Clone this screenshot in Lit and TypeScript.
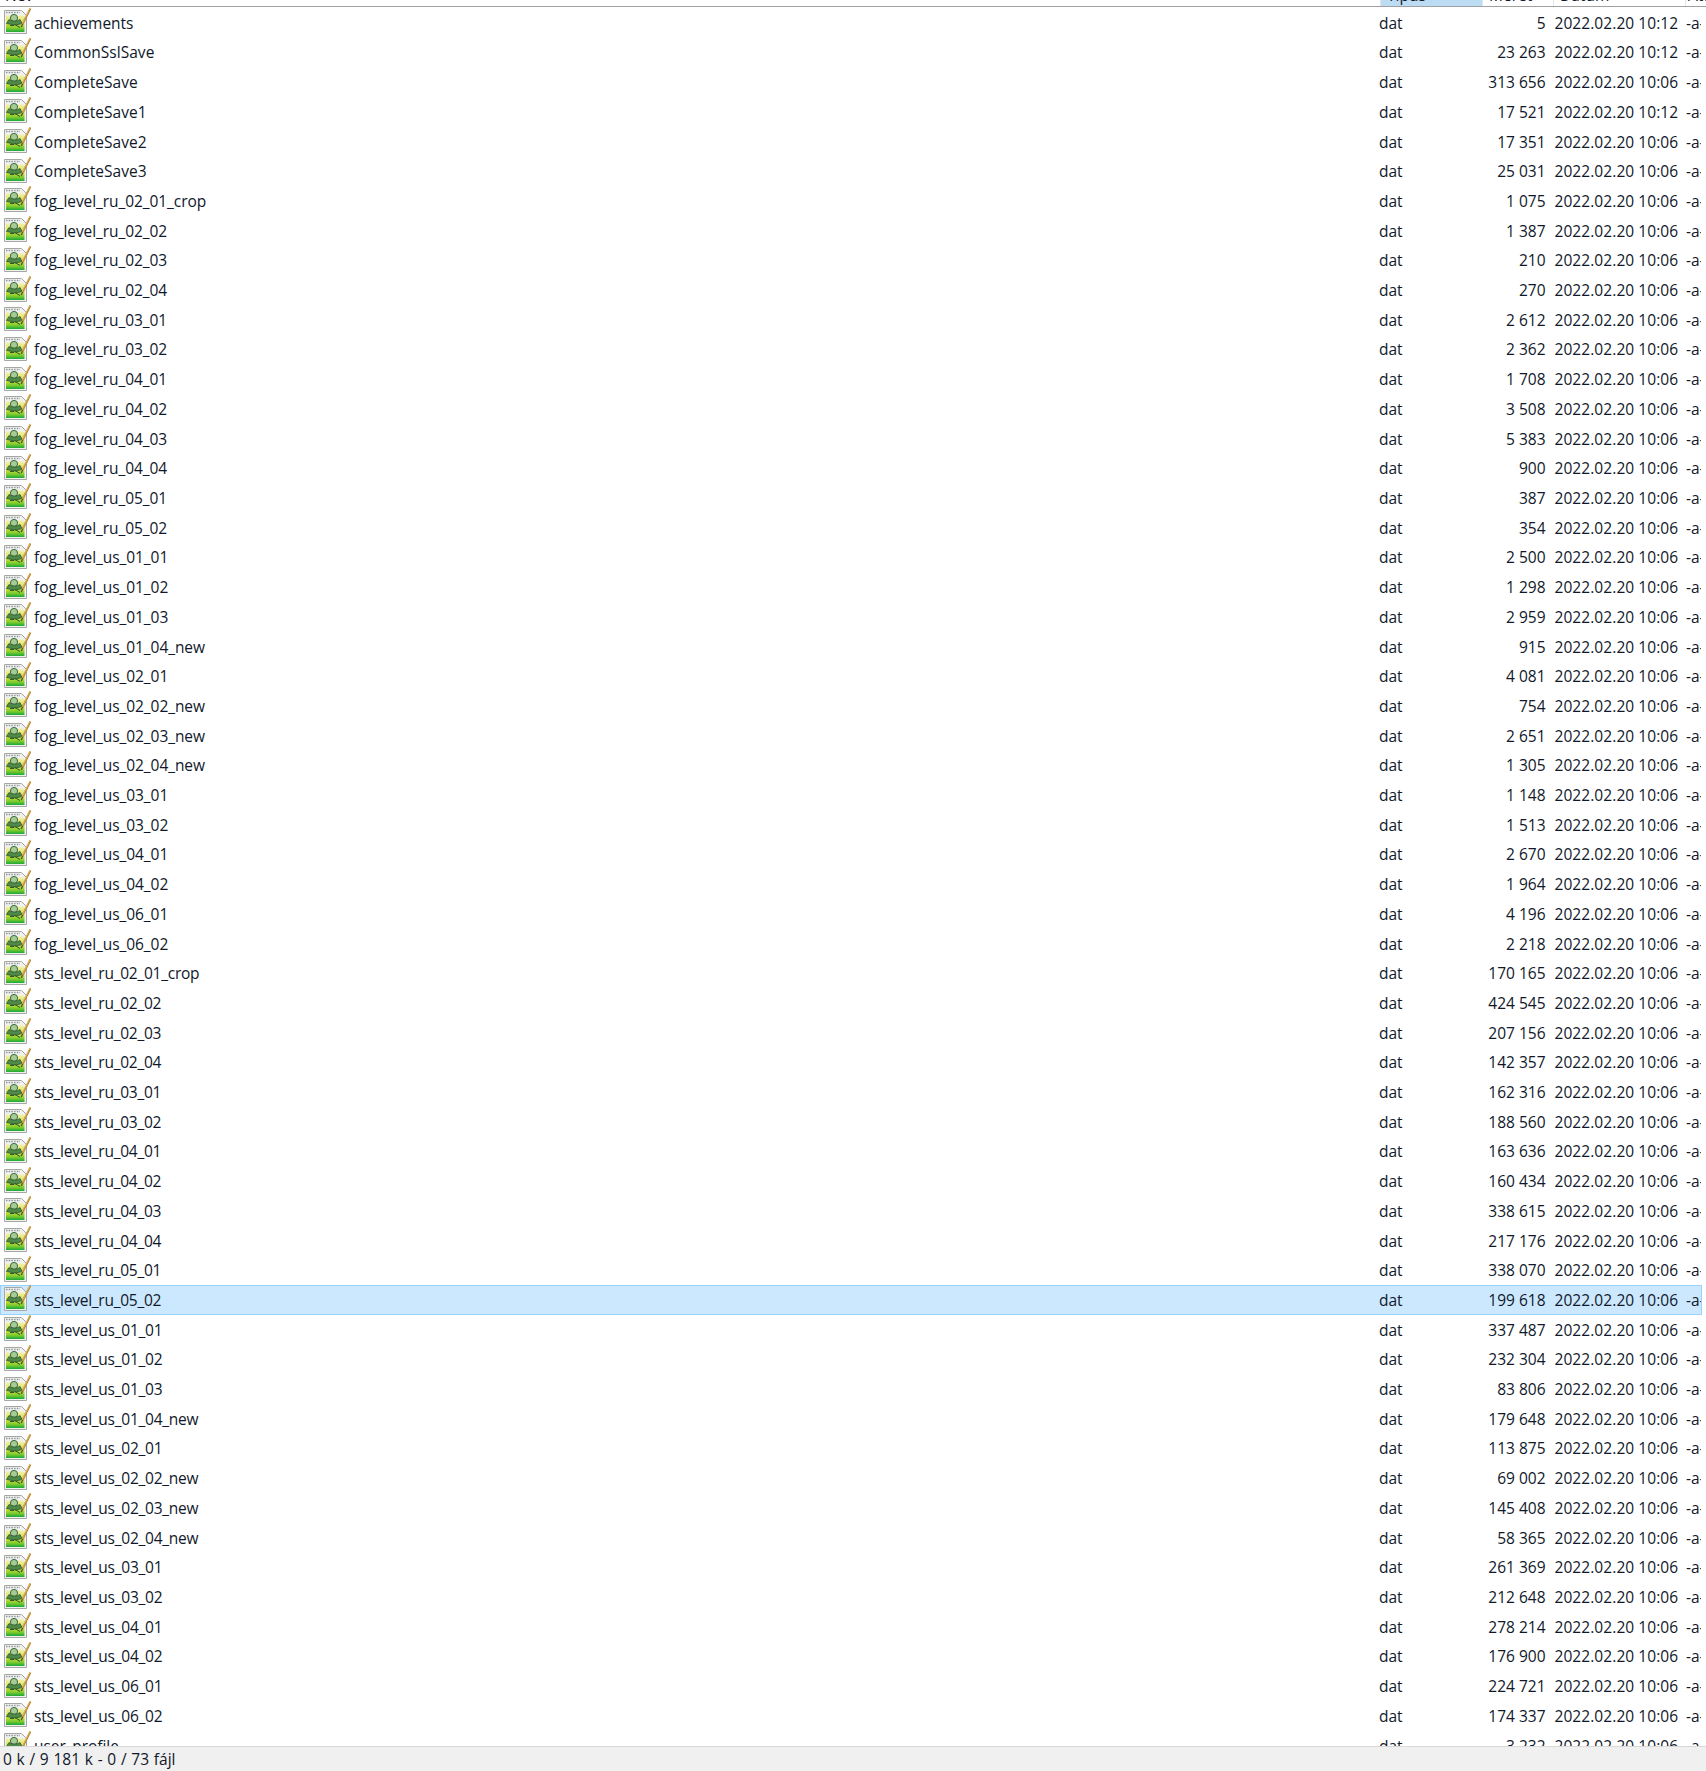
import { LitElement, html, css, svg } from "lit";
import { customElement } from "lit/decorators.js";

const data = `achievements|5|10:12
CommonSslSave|23 263|10:12
CompleteSave|313 656|10:06
CompleteSave1|17 521|10:12
CompleteSave2|17 351|10:06
CompleteSave3|25 031|10:06
fog_level_ru_02_01_crop|1 075|10:06
fog_level_ru_02_02|1 387|10:06
fog_level_ru_02_03|210|10:06
fog_level_ru_02_04|270|10:06
fog_level_ru_03_01|2 612|10:06
fog_level_ru_03_02|2 362|10:06
fog_level_ru_04_01|1 708|10:06
fog_level_ru_04_02|3 508|10:06
fog_level_ru_04_03|5 383|10:06
fog_level_ru_04_04|900|10:06
fog_level_ru_05_01|387|10:06
fog_level_ru_05_02|354|10:06
fog_level_us_01_01|2 500|10:06
fog_level_us_01_02|1 298|10:06
fog_level_us_01_03|2 959|10:06
fog_level_us_01_04_new|915|10:06
fog_level_us_02_01|4 081|10:06
fog_level_us_02_02_new|754|10:06
fog_level_us_02_03_new|2 651|10:06
fog_level_us_02_04_new|1 305|10:06
fog_level_us_03_01|1 148|10:06
fog_level_us_03_02|1 513|10:06
fog_level_us_04_01|2 670|10:06
fog_level_us_04_02|1 964|10:06
fog_level_us_06_01|4 196|10:06
fog_level_us_06_02|2 218|10:06
sts_level_ru_02_01_crop|170 165|10:06
sts_level_ru_02_02|424 545|10:06
sts_level_ru_02_03|207 156|10:06
sts_level_ru_02_04|142 357|10:06
sts_level_ru_03_01|162 316|10:06
sts_level_ru_03_02|188 560|10:06
sts_level_ru_04_01|163 636|10:06
sts_level_ru_04_02|160 434|10:06
sts_level_ru_04_03|338 615|10:06
sts_level_ru_04_04|217 176|10:06
sts_level_ru_05_01|338 070|10:06
sts_level_ru_05_02|199 618|10:06
sts_level_us_01_01|337 487|10:06
sts_level_us_01_02|232 304|10:06
sts_level_us_01_03|83 806|10:06
sts_level_us_01_04_new|179 648|10:06
sts_level_us_02_01|113 875|10:06
sts_level_us_02_02_new|69 002|10:06
sts_level_us_02_03_new|145 408|10:06
sts_level_us_02_04_new|58 365|10:06
sts_level_us_03_01|261 369|10:06
sts_level_us_03_02|212 648|10:06
sts_level_us_04_01|278 214|10:06
sts_level_us_04_02|176 900|10:06
sts_level_us_06_01|224 721|10:06
sts_level_us_06_02|174 337|10:06
user_profile|3 232|10:06`
  .split("\n")
  .map((l) => l.split("|"));

const icon = svg`<svg class="ic" viewBox="0 0 27 26" width="27" height="26">
  <defs><linearGradient id="g" x1="0" y1="0" x2="0" y2="1">
    <stop offset="0" stop-color="#f2f0b0"/>
    <stop offset="0.5" stop-color="#d6e03a"/>
    <stop offset="0.78" stop-color="#7ccb2c"/>
    <stop offset="1" stop-color="#1aa83a"/>
  </linearGradient></defs>
  <path d="M0.5 2.5H17.5L22.5 7.5V25.5H0.5Z" fill="#f1f2ef" stroke="#a4a7a4"/>
  <path d="M2 4.5H16" stroke="#8f959c" stroke-width="1.4" stroke-dasharray="1.5 1.2"/>
  <path d="M2 7.5H20.5V24H2Z" fill="url(#g)"/>
  <circle cx="10" cy="10" r="3.6" fill="#a6cc96" stroke="#3c6a44"/>
  <path d="M5 11.5C8 13.5 13 13.5 16 11.5L18 15.5L12 17L8 16.5L2.5 15.5Z" fill="#4f8a48" stroke="#2c5532" stroke-width="0.8"/>
  <path d="M11 16.5L16 19.5M6 17.5H10" stroke="#2c5532"/>
  <path d="M26.4 0.5L18.6 16" stroke="#b98a36" stroke-width="2"/>
  <path d="M26 0.3L18.2 15.6" stroke="#eac472" stroke-width="0.7"/>
  <path d="M18.6 16L17.2 19" stroke="#55504a" stroke-width="1.4"/>
</svg>`;

@customElement("app-root")
export class AppRoot extends LitElement {
  static styles = css`
    :host {
      display: block;
      width: 1706px;
      height: 1771px;
      overflow: hidden;
      background: #fff;
      font-family: "Open Sans", "Noto Sans", sans-serif;
      font-size: 15.5px;
      color: #10182a;
    }
    .page {
      display: flex;
      flex-direction: column;
      height: 1771px;
    }
    .head {
      flex: none;
      height: 6px;
      overflow: hidden;
      display: grid;
      grid-template-columns: 1381px 102px 71px 132px 1fr;
      border-bottom: 1px solid #a0a0a0;
    }
    .hc {
      overflow: hidden;
      white-space: nowrap;
      line-height: 20px;
      padding-left: 6px;
      border-right: 1px solid #e5e5e5;
    }
    .hc span {
      display: block;
      margin-top: -15px;
    }
    .hc.sort {
      background: #bcdcf4;
    }
    .hc.first {
      padding-left: 5px;
    }
    .hc.last {
      border-right: 0;
      padding-left: 2px;
    }
    .list {
      flex: 1;
      min-height: 0;
      overflow: hidden;
      padding-top: 0.9px;
      padding-right: 4px;
    }
    .row {
      height: 29.705px;
      box-sizing: border-box;
      display: grid;
      grid-template-columns: 1378px 92px 74.5px 140.5px 1fr;
      align-items: center;
      white-space: nowrap;
      border: 1px solid transparent;
    }
    .row.sel {
      background: #cce8ff;
      border-color: #99d1ff;
    }
    .row > :first-child {
      padding-left: 3px;
    }
    .name {
      display: flex;
      align-items: center;
      gap: 3px;
      letter-spacing: -0.07px;
    }
    .name.sts {
      letter-spacing: -0.25px;
    }
    .name.cap {
      letter-spacing: 0.03px;
    }
    .ic {
      flex: none;
      margin-top: -3px;
    }
    .size {
      text-align: right;
    }
    .date {
      padding-left: 9px;
      letter-spacing: 0.07px;
    }
    .attr {
      overflow: hidden;
    }
    .status {
      flex: none;
      height: 24px;
      background: #f0f0f0;
      border-top: 1px solid #d9d9d9;
      padding-left: 3px;
      display: flex;
      align-items: center;
      word-spacing: 0.7px;
    }
  `;

  render() {
    const nameClass = (n: string) =>
      n.startsWith("sts") ? "name sts" : /^C/.test(n) ? "name cap" : "name";
    return html`<div class="page">
      <div class="head">
        <div class="hc first"><span>Név</span></div>
        <div class="hc sort"><span>Típus</span></div>
        <div class="hc"><span>Méret</span></div>
        <div class="hc"><span>Dátum</span></div>
        <div class="hc last"><span>Attr</span></div>
      </div>
      <div class="list">
        ${data.map(
          ([n, s, t]) => html`<div class="row ${n === "sts_level_ru_05_02" ? "sel" : ""}">
            <div class=${nameClass(n)}>${icon}<span>${n}</span></div>
            <div>dat</div>
            <div class="size">${s}</div>
            <div class="date">2022.02.20 ${t}</div>
            <div class="attr">-a-</div>
          </div>`
        )}
      </div>
      <div class="status">0 k / 9 181 k - 0 / 73 fájl</div>
    </div>`;
  }
}
